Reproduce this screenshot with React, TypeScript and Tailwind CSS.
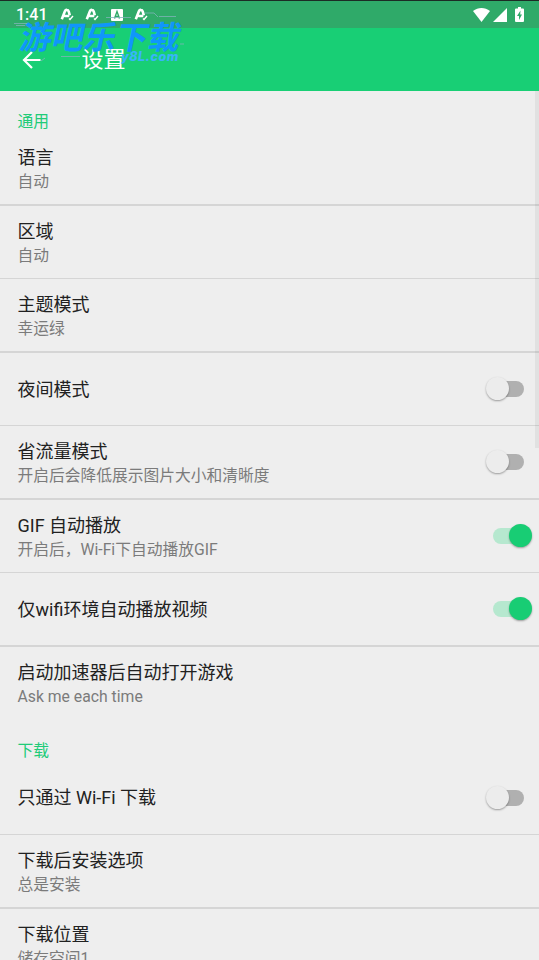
import React from 'react';

interface SettingRow {
  title: string;
  summary?: string;
  enabled?: boolean;
}

interface SettingSection {
  name: string;
  rows: SettingRow[];
}

const sections: SettingSection[] = [
  {
    name: '通用',
    rows: [
      { title: '语言', summary: '自动' },
      { title: '区域', summary: '自动' },
      { title: '主题模式', summary: '幸运绿' },
      { title: '夜间模式', enabled: false },
      { title: '省流量模式', summary: '开启后会降低展示图片大小和清晰度', enabled: false },
      { title: 'GIF 自动播放', summary: '开启后，Wi-Fi下自动播放GIF', enabled: true },
      { title: '仅wifi环境自动播放视频', enabled: true },
      { title: '启动加速器后自动打开游戏', summary: 'Ask me each time' },
    ],
  },
  {
    name: '下载',
    rows: [
      { title: '只通过 Wi-Fi 下载', enabled: false },
      { title: '下载后安装选项', summary: '总是安装' },
      { title: '下载位置', summary: '储存空间1' },
    ],
  },
];

const Toggle: React.FC<{ on: boolean }> = ({ on }) => (
  <div className={`relative h-4 w-[31px] shrink-0 rounded-full ${on ? 'bg-[#b6e8cf]' : 'bg-[#b0b0b0]'}`}>
    <div
      className={`absolute -top-[4px] size-[23px] rounded-full shadow-[0_1px_2px_rgba(0,0,0,0.35)] ${
        on ? 'left-[15.5px] bg-[#18cd74]' : '-left-[7.5px] bg-[#ececec]'
      }`}
    ></div>
  </div>
);

const Row: React.FC<{ row: SettingRow; divider: boolean }> = ({ row, divider }) => (
  <div className="flex h-[73.5px] flex-col">
    <div className="flex min-h-0 flex-1 items-center justify-between pr-[15px] pl-[17.5px]">
      <div className={row.summary ? 'pt-[3px]' : 'pt-[1.5px]'}>
        <p className="text-[18px] leading-[24px] whitespace-nowrap text-[#212121]">{row.title}</p>
        {row.summary && (
          <p className="text-[15.75px] leading-[23px] whitespace-nowrap text-[#7b7b7b]">{row.summary}</p>
        )}
      </div>
      {row.enabled !== undefined && <Toggle on={row.enabled} />}
    </div>
    <div className={`h-[1.5px] shrink-0 ${divider ? 'bg-[#d5d5d5]' : ''}`}></div>
  </div>
);

const LetterIcon = () => (
  <svg viewBox="0 0 14 13" className="h-[13px] w-[14px]" fill="none" stroke="white">
    <path d="M1.8 11.2 4.9 3.2Q5.5 1.7 7 1.9 8.2 2 8.7 3.4L9.8 7.3M4.3 8h5" strokeWidth="2.6" />
    <path d="m9 10.5 1 1 3-3.5" strokeWidth="1.4" />
  </svg>
);

const StatusBar = () => (
  <div className="flex h-7 items-center justify-between border-t border-[#1c2b25] bg-[#2faa69] pr-[15px] pl-4">
    <div className="flex items-center">
      <span className="w-[44px] pt-px text-[16px] leading-none font-medium text-white">1:41</span>
      <div className="flex items-center gap-[11px]">
        <LetterIcon />
        <LetterIcon />
        <svg viewBox="0 0 12 12" className="ml-px h-3 w-3">
          <rect width="12" height="12" rx="1" fill="white" />
          <path d="m3.5 9.5 2.5-7 2.5 7M4.5 7.4h3" fill="none" stroke="#2faa69" strokeWidth="1.4" />
        </svg>
        <LetterIcon />
      </div>
    </div>
    <div className="flex items-center">
      <svg viewBox="0 0 17 14" className="h-[14px] w-[17px]">
        <path d="M0 3C5-1 12-1 17 3L8.5 14Z" fill="white" />
      </svg>
      <svg viewBox="0 0 14 14" className="ml-[3px] h-[14px] w-[14px]">
        <path d="M14 0v14H0Z" fill="white" />
      </svg>
      <svg viewBox="0 0 9 15" className="ml-[8px] h-[15px] w-[9px]">
        <path d="M3 0h3v1.5h2q1 0 1 1V14q0 1-1 1H1q-1 0-1-1V2.5q0-1 1-1h2Z" fill="white" />
        <path d="M5.5 3.5 2 9h2v4l3-5.5H5.2Z" fill="#2faa69" />
      </svg>
    </div>
  </div>
);

const Watermark = () => (
  <div className="absolute top-[20px] left-[14px] h-[46px] w-[176px] text-[#1096fb]">
    <svg
      viewBox="0 0 176 46"
      className="absolute inset-0 h-full w-full overflow-visible"
      fill="none"
      stroke="#7fb3b8"
      strokeWidth="0.8"
    >
      <path d="M0 3.5h13M2 5.5h9M47 36.5h19M27 41l4-3M92-2.5h25M118 14h6M166 24h4M131-7h9l4 4M145-3.5h17" />
    </svg>
    <p className="relative top-px left-[3px] origin-bottom-left -skew-x-12 text-[32px] leading-[35px] font-bold whitespace-nowrap">
      游吧乐下载
    </p>
    <p className="absolute top-[30px] left-[107px] w-[58px] font-[Inter,sans-serif] text-[12.5px] leading-[14px] font-extrabold tracking-[0.5px] whitespace-nowrap italic text-[#38b4fa]">
      y8L.com
    </p>
  </div>
);

const App: React.FC = () => (
  <div className="relative h-[960px] w-[539px] overflow-hidden bg-[#eeeeee] font-[Roboto,'Noto_Sans_CJK_SC',sans-serif]">
    <StatusBar />
    <header className="flex h-[63px] items-center bg-[#18cf75] pl-[22px] text-white">
      <svg viewBox="0 0 19 18" className="h-[18px] w-[19px]" fill="none" stroke="white" strokeWidth="2.2">
        <path d="M18.5 9H2M10 1 2 9l8 8" />
      </svg>
      <h1 className="ml-[40.5px] pt-px text-[22px] leading-[28px]">设置</h1>
    </header>
    <div className="h-0 shadow-[0_1px_4px_rgba(0,0,0,0.15)]"></div>

    <main>
      {sections.map((section) => (
        <section key={section.name}>
          <h2 className="h-[41.25px] pt-[18.5px] pl-[17.5px] text-[15.75px] leading-[23px] text-[#20cb78]">
            {section.name}
          </h2>
          {section.rows.map((row) => (
            <Row key={row.title} row={row} divider={row !== section.rows[section.rows.length - 1]} />
          ))}
        </section>
      ))}
    </main>

    {/* Scroll thumb */}
    <div className="absolute top-[91px] right-0 h-[357px] w-[4px] bg-black/5"></div>
    <Watermark />
  </div>
);

export default App;
